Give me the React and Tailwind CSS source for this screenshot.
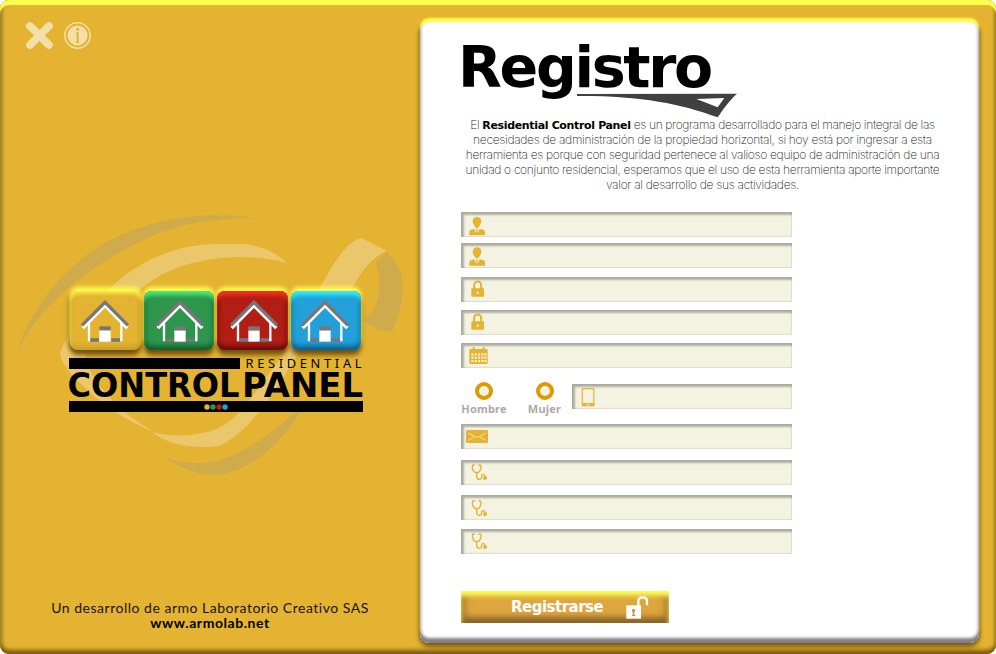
const FIELD =
  "flex h-[25px] items-start bg-[#f4f2e0] border-l-[1px] border-t-[1px] border-[#a9aaa2] shadow-[inset_2px_2px_2px_rgba(80,85,75,0.42),inset_-1px_-1px_1px_rgba(120,125,110,0.18)]";

const GOLD = "#e4b332";

function Icon({ children }) {
  return (
    <svg className="-ml-px -mt-px h-[25px] w-[30px] shrink-0" viewBox="0 0 90 75" fill={GOLD}>
      {children}
    </svg>
  );
}

function UserIcon({ up = 0 }) {
  return (
    <Icon>
      <g transform={`translate(0 ${-up})`}>
        <path d="M48 15c8 0 13 5 13 13 0 6-3.500 10-5.500 13.500-1.500 3-3 7-7.500 7s-6-4-7.500-7c-2-3.500-5.500-7.500-5.500-13.500C35 20 40 15 48 15z" />
        <path d="M25 70V60c0-5 4-7 15-9l5 13 1.500-7-2-5h7l-2 5 1.500 7 5-13c12 2 16 4 16 9v10z" />
      </g>
    </Icon>
  );
}

function LockIcon() {
  return (
    <Icon>
      <path d="M39.500 36V24a10.500 10.500 0 0 1 21 0v12" fill="none" stroke={GOLD} strokeWidth="6" />
      <rect x="31" y="34" width="38" height="25" rx="2" />
      <circle cx="50" cy="47" r="3.500" fill="#f4f2e0" />
    </Icon>
  );
}

function CalendarIcon() {
  const cols = [31, 41, 51, 61, 70];
  const rows = [31, 41, 51];
  return (
    <Icon>
      <rect x="25" y="18" width="55" height="45" rx="4" />
      <rect x="35" y="12" width="6" height="12" rx="2" />
      <rect x="65" y="12" width="6" height="12" rx="2" />
      {rows.map((y) =>
        cols.map((x) => <rect key={`${x}-${y}`} x={x} y={y} width="6.500" height="6.500" fill="#f8f1cf" />)
      )}
    </Icon>
  );
}

function PhoneIcon() {
  return (
    <Icon>
      <rect x="31" y="14" width="34.500" height="51" rx="2" fill="none" stroke={GOLD} strokeWidth="3.500" />
      <rect x="30" y="57" width="37" height="9" />
      <rect x="44" y="60" width="8" height="3.500" fill="#f4f2e0" />
    </Icon>
  );
}

function MailIcon() {
  return (
    <Icon>
      <rect x="15" y="18" width="66" height="39" rx="4" />
      <path d="M22 27l20 11q6 4 12 0l20-11M22 49l17-10M74 49L57 39" fill="none" stroke="#f7ecc0" strokeWidth="2.500" />
    </Icon>
  );
}

function StethoscopeIcon({ down = 0 }) {
  return (
    <Icon>
      <g transform={`translate(0 ${down})`} fill="none" stroke={GOLD} strokeWidth="4" strokeLinecap="round" strokeLinejoin="round">
        <path d="M40 15h-3q-3 0-3 5c0 8 4 18 11 18h4c7 0 11-10 11-18q0-5-3-5h-3" />
        <path d="M47 38v11c0 6 3 9 8 9 6 0 7-4 6.500-9-.5-6 9-7 10-1v4" />
        <circle cx="72" cy="54" r="4" fill={GOLD} />
      </g>
    </Icon>
  );
}

function Field({ className = "", children }) {
  return <div className={`${FIELD} ${className}`}>{children}</div>;
}

function Radio({ label, className, text }) {
  return (
    <label className={`flex flex-col items-center ${className}`}>
      <span className="size-[18px] rounded-full border-[4px] border-[#de9a04] bg-[#f4f2e0]" />
      <span className={`mt-[2px] text-[11px] font-bold leading-[13px] text-[#aea9a8] ${text}`}>{label}</span>
    </label>
  );
}

function House() {
  return (
    <svg className="h-[42px] w-[48px]" viewBox="0 0 144 126">
      <path d="M24 70v54M121 70v54" stroke="#fff" strokeWidth="7" />
      <path d="M5 84L72 17l67 67" fill="none" stroke="#fff" strokeWidth="10" />
      <path d="M3 76L72 7l69 69" fill="none" stroke="#77777a" strokeWidth="10" />
      <path d="M28 115h26v10H28zM91 115h26v10H91z" fill="#77777a" />
      <path d="M55 91h34v34H55z" fill="#fff" />
      <path d="M55 79h34v12H55z" fill="#77777a" />
    </svg>
  );
}

function Tile({ className }) {
  return (
    <div className={`flex h-[59px] w-[70.500px] items-end justify-center rounded-[8px] pb-[8px] ${className}`}>
      <House />
    </div>
  );
}

function Swirl() {
  return (
    <svg className="absolute left-0 top-[200px] h-[290px] w-[430px]" viewBox="0 0 1290 870">
      <g fill="#cfab4c">
        <path d="M52 455C90 330 190 195 330 120C470 50 620 32 778 56C620 50 500 80 390 140C230 225 110 335 52 455z" />
        <path d="M1160 156C1195 185 1212 230 1208 280C1204 325 1190 365 1175 394C1150 398 1115 382 1086 358C1125 345 1138 300 1137 255C1137 225 1133 205 1128 188z" />
        <path d="M470 758C540 800 640 800 720 755C800 712 850 670 890 632L925 590C880 690 780 800 670 822C600 832 540 805 470 758z" />
      </g>
      <g fill="#ebc76b">
        <path d="M320 274C420 175 540 132 650 132H735C785 138 830 158 860 189C790 170 710 165 620 180C520 198 450 235 400 290L330 350C270 400 245 455 260 490C290 560 360 640 465 697C380 665 300 610 240 550C210 520 185 490 180 462C195 410 250 330 320 274z" />
        <path d="M950 278C990 215 1030 125 1085 114L1160 152C1110 175 1080 220 1050 275L890 470C830 560 760 690 660 737C590 748 510 738 456 697C560 720 650 700 700 655C760 600 820 490 870 440z" />
      </g>
    </svg>
  );
}

function Logo() {
  return (
    <div className="relative ml-[69px] w-[294px]">
      <div className="ml-px flex gap-[3px]">
        <Tile className="bg-[#e4b332] shadow-[inset_0_3px_4px_-1px_#ffff4f,inset_0_-4px_4px_#b0862366,0_-4px_4px_#ffff4f,0_5px_5px_#6e500f,-2px_0_4px_#b78d27,inset_-2px_0_3px_#b78d2766]" />
        <Tile className="bg-[#2e954d] pl-[2px] shadow-[inset_0_5px_4px_-1px_#4dee78,inset_0_-4px_5px_#165c2b,inset_2px_0_3px_#1d6e3688,inset_-2px_0_3px_#1d6e3688,0_-4px_4px_#ffff4f,0_5px_5px_#6e500f]" />
        <Tile className="bg-[#b11e16] pl-[3px] shadow-[inset_0_5px_4px_-1px_#ff3022,inset_0_-4px_5px_#650c09,inset_2px_0_3px_#83141188,inset_-2px_0_3px_#83141188,0_-4px_4px_#ffff4f,0_5px_5px_#6e500f]" />
        <Tile className="bg-[#239fd9] pr-[2px] shadow-[inset_0_5px_4px_-1px_#31f2ff,inset_0_-4px_5px_#0f6087,inset_2px_0_3px_#1779a688,inset_-2px_0_3px_#1779a688,0_-4px_4px_#ffff4f,0_5px_5px_#6e500f]" />
      </div>
      <svg className="mt-[8px] block h-[54px] w-[294px] overflow-visible" viewBox="0 0 294 54" fontFamily="'DejaVu Sans', sans-serif">
        <rect width="171" height="11" />
        <text x="176.500" y="9.800" fontSize="12.800" textLength="116" fontFamily="'Noto Sans', sans-serif">RESIDENTIAL</text>
        <text x="-1.500" y="38.800" fontSize="33" fontWeight="bold" textLength="172" lengthAdjust="spacingAndGlyphs">CONTROL</text>
        <text x="173" y="38.800" fontSize="33" fontWeight="bold" textLength="121" lengthAdjust="spacingAndGlyphs">PANEL</text>
        <rect y="43" width="294" height="11" />
        <circle cx="138" cy="49" r="2.700" fill="#e4b332" />
        <circle cx="144" cy="49" r="2.700" fill="#2e954d" />
        <circle cx="150" cy="49" r="2.700" fill="#b11e16" />
        <circle cx="156" cy="49" r="2.700" fill="#239fd9" />
      </svg>
    </div>
  );
}

export default function App() {
  return (
    <div className="h-[654px] w-[996px] overflow-hidden bg-white">
      <div className="flex h-[654px] w-full rounded-[9px] bg-[#e4b332] shadow-[inset_0_5px_1px_#ffff4f,inset_0_-4px_4px_#7c5c12,inset_2px_0_4px_#a8832f,inset_-1px_0_3px_#a8832f]">
        <aside className="relative flex w-[420px] shrink-0 flex-col">
          <Swirl />
          <div className="flex gap-[11px] pl-[26px] pt-[22px]">
            <svg className="size-[27px]" viewBox="0 0 81 81">
              <path d="M12 12l57 57M69 12L12 69" stroke="#f3dfa8" strokeWidth="23" strokeLinecap="round" />
            </svg>
            <svg className="size-[27px]" viewBox="0 0 81 81">
              <circle cx="40.500" cy="40.500" r="38" fill="none" stroke="#f3dfa8" strokeWidth="4.500" />
              <circle cx="40.500" cy="40.500" r="30" fill="#f3dfa8" />
              <circle cx="41" cy="22" r="4.500" fill={GOLD} />
              <path d="M34 31h10v28l4 4H34l4-4V34z" fill={GOLD} />
            </svg>
          </div>
          <div className="mt-[242px]">
            <Logo />
          </div>
          <footer className="mt-[188px] text-center font-['Lato'] text-[14px] leading-[15px] text-[#17130a]">
            <p className="tracking-[0.510px]">Un desarrollo de armo Laboratorio Creativo SAS</p>
            <p className="font-bold text-black tracking-[0.550px]">www.armolab.net</p>
          </footer>
        </aside>

        <main className="mt-[22px] flex h-[621px] w-[559px] shrink-0 flex-col rounded-[9px] bg-white pl-[41px] shadow-[inset_0_-5px_3px_#818187,inset_2px_-1px_3px_#dcdce4,inset_-2px_-1px_3px_#dcdce4,0_-4px_2px_#ffff4f,0_4px_5px_#7c5c12,-1px_0_3px_#a07820,1px_0_3px_#a07820]">
          <header className="relative h-[90px]">
            <h1 className="-ml-[3px] origin-left pt-[15px] font-['DejaVu_Sans'] text-[57px] font-bold leading-[60px] tracking-[-2.300px] text-black">Registro</h1>
            <svg className="absolute left-[116px] top-[69px] h-[27px] w-[164px]" viewBox="0 0 492 81">
              <path fill="#404040" fillRule="evenodd" d="M0 9L480 8C455 30 435 60 422 79C310 38 190 14 0 15zM358 24l64 25 20-28z" />
            </svg>
          </header>
          <div className="-ml-px mt-[5px] flex w-[485px] flex-col items-center whitespace-nowrap font-['Inter'] text-[12px] font-extralight leading-[15px] text-[#1a1a1a]">
            <p className="h-[15px] tracking-[-0.350px]">
              El <b className="font-['DejaVu_Sans'] text-[11px] font-bold leading-none text-black">Residential Control Panel</b> es un programa desarrollado para el manejo integral de las
            </p>
            <p className="tracking-[-0.310px]">necesidades de administración de la propiedad horizontal, si hoy está por ingresar a esta</p>
            <p className="tracking-[-0.330px]">herramienta es porque con seguridad pertenece al valioso equipo de administración de una</p>
            <p className="tracking-[-0.320px]">unidad o conjunto residencial, esperamos que el uso de esta herramienta aporte importante</p>
            <p className="tracking-[-0.310px]">valor al desarrollo de sus actividades.</p>
          </div>

          <form className="mt-[20px] flex w-[331px] flex-col">
            <Field><UserIcon /></Field>
            <Field className="mt-[6px]"><UserIcon up={2} /></Field>
            <Field className="mt-[9px]"><LockIcon /></Field>
            <Field className="mt-[8px]"><LockIcon /></Field>
            <Field className="mt-[8px]"><CalendarIcon /></Field>
            <div className="mt-[14px] flex h-[34px] items-start">
              <Radio label="Hombre" className="ml-[0.500px] w-[45px]" text="tracking-[0.200px]" />
              <Radio label="Mujer" className="ml-[21.500px] w-[33px]" text="tracking-[0.200px]" />
              <Field className="ml-auto mt-[2px] w-[220px]"><PhoneIcon /></Field>
            </div>
            <Field className="mt-[8px]"><MailIcon /></Field>
            <Field className="mt-[11px]"><StethoscopeIcon /></Field>
            <Field className="mt-[10px]"><StethoscopeIcon down={3} /></Field>
            <Field className="mt-[9px]"><StethoscopeIcon /></Field>
            <button
              type="button"
              className="mt-[37px] flex h-[32px] w-[208px] items-center bg-[#dfa640] pl-[50px] shadow-[inset_0_5px_5px_#ffff55,inset_0_-5px_7px_#82602a,inset_4px_0_8px_#b37f2b,inset_-4px_0_8px_#b37f2b]"
            >
              <span className="font-['DejaVu_Sans'] text-[15px] font-bold leading-[20px] tracking-[-0.500px] text-white">Registrarse</span>
              <svg className="ml-auto mr-[20px] mt-px h-[23px] w-[23px]" viewBox="0 0 69 69">
                <path d="M37 30V15Q37 4 50 4Q63 4 63 15V28" fill="none" stroke="#fff" strokeWidth="7" />
                <path d="M1 28h44v40H1z" fill="#fff" />
                <path d="M18 40h9v7h-2v10h3v3H18v-3h2V47h-2z" fill="#c9953c" />
              </svg>
            </button>
          </form>
        </main>
      </div>
    </div>
  );
}
